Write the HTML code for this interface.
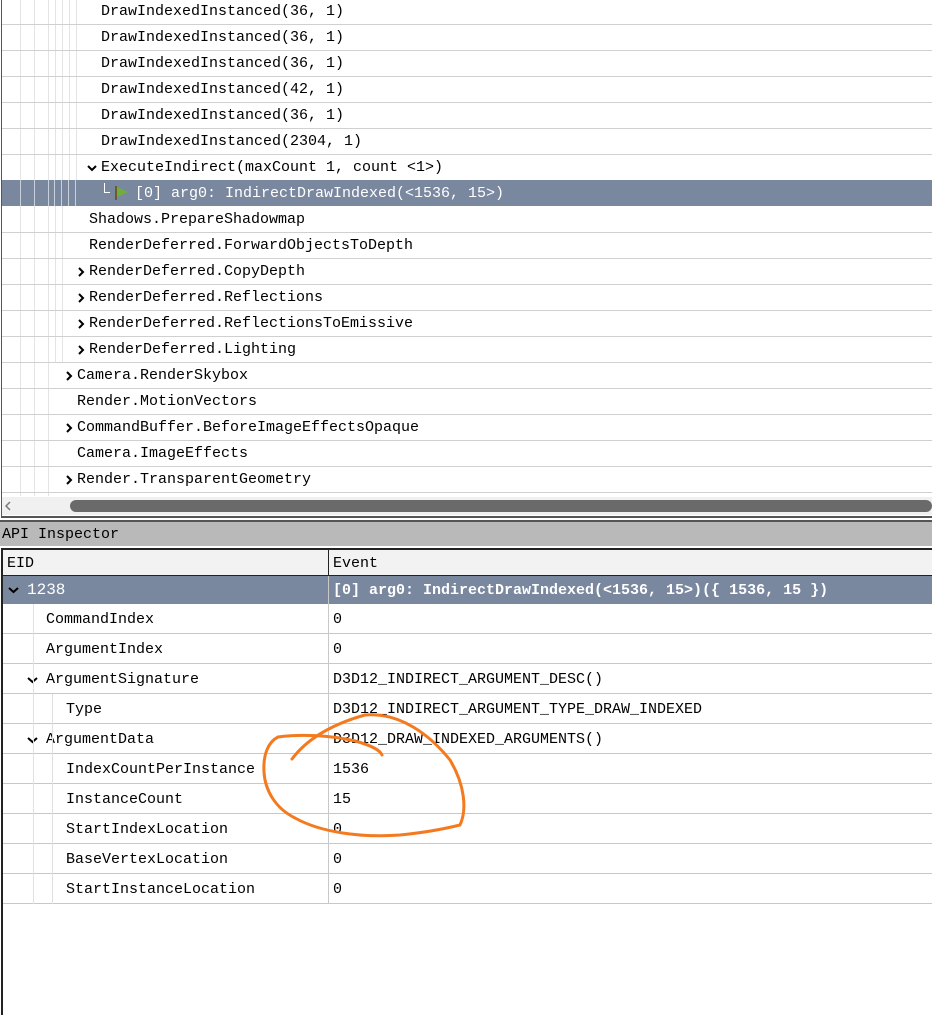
<!DOCTYPE html>
<html><head><style>
body{margin:0;width:932px;height:1015px;background:#fff;position:relative;overflow:hidden;font-family:"Liberation Mono","Noto Sans CJK SC",monospace;font-size:15px;color:#000}
.a{position:absolute;white-space:nowrap}
.r{position:absolute;left:2px;right:0;height:26px;border-bottom:1px solid #d0d0d0}
.t{position:absolute;line-height:27px;white-space:nowrap}
.v{position:absolute;width:1px;background:#e4e4e4}
.ir{position:absolute;left:3px;right:0;height:29px;border-bottom:1px solid #c8c8c8}
.it{position:absolute;line-height:31px;white-space:nowrap}
svg.c{position:absolute}
</style></head><body>
<div class="a" style="left:1px;top:0;width:1px;height:518px;background:#555"></div>
<div class="v" style="left:20px;top:0;height:496px"></div>
<div class="v" style="left:34px;top:0;height:496px"></div>
<div class="v" style="left:48px;top:0;height:496px"></div>
<div class="v" style="left:55px;top:0;height:362px"></div>
<div class="v" style="left:62px;top:0;height:362px"></div>
<div class="v" style="left:69px;top:0;height:180px"></div>
<div class="v" style="left:76px;top:0;height:180px"></div>

<div class="r" style="top:-2px"><span class="t" style="left:99px">DrawIndexedInstanced(36, 1)</span></div>
<div class="r" style="top:24px"><span class="t" style="left:99px">DrawIndexedInstanced(36, 1)</span></div>
<div class="r" style="top:50px"><span class="t" style="left:99px">DrawIndexedInstanced(36, 1)</span></div>
<div class="r" style="top:76px"><span class="t" style="left:99px">DrawIndexedInstanced(42, 1)</span></div>
<div class="r" style="top:102px"><span class="t" style="left:99px">DrawIndexedInstanced(36, 1)</span></div>
<div class="r" style="top:128px"><span class="t" style="left:99px">DrawIndexedInstanced(2304, 1)</span></div>
<div class="r" style="top:154px"><svg class="c" style="left:85px;top:11px" width="10" height="7"><path d="M1 1L5 5L9 1" fill="none" stroke="#000" stroke-width="2"/></svg><span class="t" style="left:99px">ExecuteIndirect(maxCount 1, count &lt;1&gt;)</span></div>
<div class="r" style="top:180px;background:#7a889f;border-bottom:none;height:26px">
<div class="a" style="left:18px;top:0;width:1px;height:26px;background:#c8d0dc"></div>
<div class="a" style="left:32px;top:0;width:1px;height:26px;background:#c8d0dc"></div>
<div class="a" style="left:46px;top:0;width:1px;height:26px;background:#c8d0dc"></div>
<div class="a" style="left:52px;top:0;width:1px;height:26px;background:#c8d0dc"></div>
<div class="a" style="left:59px;top:0;width:1px;height:26px;background:#c8d0dc"></div>
<div class="a" style="left:66px;top:0;width:1px;height:26px;background:#c8d0dc"></div>
<div class="a" style="left:73px;top:0;width:1px;height:26px;background:#c8d0dc"></div>
<div class="a" style="left:102px;top:3px;width:5px;height:9px;border-left:1px solid #fff;border-bottom:1px solid #fff"></div>
<svg class="a" style="left:112px;top:5px" width="16" height="16"><path d="M2 1 L2 15" stroke="#6b5a2a" stroke-width="2"/><path d="M3 2 L14 7 L3 12Z" fill="#6fae3a"/></svg>
<span class="t" style="left:133px;color:#fff">[0] arg0: IndirectDrawIndexed(&lt;1536, 15&gt;)</span></div>
<div class="r" style="top:206px"><span class="t" style="left:87px">Shadows.PrepareShadowmap</span></div>
<div class="r" style="top:232px"><span class="t" style="left:87px">RenderDeferred.ForwardObjectsToDepth</span></div>
<div class="r" style="top:258px"><svg class="c" style="left:76px;top:9px" width="7" height="10"><path d="M1 1L5 5L1 9" fill="none" stroke="#000" stroke-width="2"/></svg><span class="t" style="left:87px">RenderDeferred.CopyDepth</span></div>
<div class="r" style="top:284px"><svg class="c" style="left:76px;top:9px" width="7" height="10"><path d="M1 1L5 5L1 9" fill="none" stroke="#000" stroke-width="2"/></svg><span class="t" style="left:87px">RenderDeferred.Reflections</span></div>
<div class="r" style="top:310px"><svg class="c" style="left:76px;top:9px" width="7" height="10"><path d="M1 1L5 5L1 9" fill="none" stroke="#000" stroke-width="2"/></svg><span class="t" style="left:87px">RenderDeferred.ReflectionsToEmissive</span></div>
<div class="r" style="top:336px"><svg class="c" style="left:76px;top:9px" width="7" height="10"><path d="M1 1L5 5L1 9" fill="none" stroke="#000" stroke-width="2"/></svg><span class="t" style="left:87px">RenderDeferred.Lighting</span></div>
<div class="r" style="top:362px"><svg class="c" style="left:64px;top:9px" width="7" height="10"><path d="M1 1L5 5L1 9" fill="none" stroke="#000" stroke-width="2"/></svg><span class="t" style="left:75px">Camera.RenderSkybox</span></div>
<div class="r" style="top:388px"><span class="t" style="left:75px">Render.MotionVectors</span></div>
<div class="r" style="top:414px"><svg class="c" style="left:64px;top:9px" width="7" height="10"><path d="M1 1L5 5L1 9" fill="none" stroke="#000" stroke-width="2"/></svg><span class="t" style="left:75px">CommandBuffer.BeforeImageEffectsOpaque</span></div>
<div class="r" style="top:440px"><span class="t" style="left:75px">Camera.ImageEffects</span></div>
<div class="r" style="top:466px"><svg class="c" style="left:64px;top:9px" width="7" height="10"><path d="M1 1L5 5L1 9" fill="none" stroke="#000" stroke-width="2"/></svg><span class="t" style="left:75px">Render.TransparentGeometry</span></div>
<div class="a" style="left:2px;top:497px;width:930px;height:18px;background:#f0f0f0"></div>
<svg class="c" style="left:5px;top:501px" width="7" height="10"><path d="M5 1L1 5L5 9" fill="none" stroke="#777" stroke-width="1.5"/></svg>
<div class="a" style="left:70px;top:500px;width:862px;height:12px;background:#6a6a6a;border-radius:6px"></div>
<div class="a" style="left:1px;top:516px;width:931px;height:2px;background:#555"></div>
<div class="a" style="left:0;top:520px;width:932px;height:2px;background:#555"></div>
<div class="a" style="left:0;top:522px;width:932px;height:24px;background:#b9b9b9;line-height:25px;padding-left:2px">API Inspector</div>
<div class="a" style="left:1px;top:548px;width:931px;height:2px;background:#222"></div>
<div class="a" style="left:1px;top:548px;width:2px;height:467px;background:#222"></div>
<div class="a" style="left:3px;top:550px;width:929px;height:25px;background:#f2f2f2;border-bottom:1px solid #222"></div>
<div class="a" style="left:7px;top:550px;line-height:27px">EID</div>
<div class="a" style="left:328px;top:550px;width:1px;height:26px;background:#222"></div>
<div class="a" style="left:333px;top:550px;line-height:27px">Event</div>
<div class="a" style="left:3px;top:576px;width:929px;height:28px;background:#7a889f"></div>
<svg class="c" style="left:8px;top:587px" width="11" height="7"><path d="M1 1L5.5 5L10 1" fill="none" stroke="#000" stroke-width="2"/></svg>
<div class="a" style="left:27px;top:576px;line-height:29px;color:#fff;font-size:16px">1238</div>
<div class="a" style="left:328px;top:576px;width:1px;height:328px;background:#c8c8c8"></div>
<div class="a" style="left:333px;top:576px;line-height:29px;color:#fff;font-weight:bold">[0] arg0: IndirectDrawIndexed(&lt;1536, 15&gt;)({ 1536, 15 })</div>

<div class="ir" style="top:604px"><span class="it" style="left:43px">CommandIndex</span><span class="it" style="left:330px">0</span></div>
<div class="ir" style="top:634px"><span class="it" style="left:43px">ArgumentIndex</span><span class="it" style="left:330px">0</span></div>
<div class="ir" style="top:664px"><svg class="c" style="left:24px;top:13px" width="11" height="7"><path d="M1 1L5.5 5L10 1" fill="none" stroke="#000" stroke-width="2"/></svg><span class="it" style="left:43px">ArgumentSignature</span><span class="it" style="left:330px">D3D12_INDIRECT_ARGUMENT_DESC()</span></div>
<div class="ir" style="top:694px"><span class="it" style="left:63px">Type</span><span class="it" style="left:330px">D3D12_INDIRECT_ARGUMENT_TYPE_DRAW_INDEXED</span></div>
<div class="ir" style="top:724px"><svg class="c" style="left:24px;top:13px" width="11" height="7"><path d="M1 1L5.5 5L10 1" fill="none" stroke="#000" stroke-width="2"/></svg><span class="it" style="left:43px">ArgumentData</span><span class="it" style="left:330px">D3D12_DRAW_INDEXED_ARGUMENTS()</span></div>
<div class="ir" style="top:754px"><span class="it" style="left:63px">IndexCountPerInstance</span><span class="it" style="left:330px">1536</span></div>
<div class="ir" style="top:784px"><span class="it" style="left:63px">InstanceCount</span><span class="it" style="left:330px">15</span></div>
<div class="ir" style="top:814px"><span class="it" style="left:63px">StartIndexLocation</span><span class="it" style="left:330px">0</span></div>
<div class="ir" style="top:844px"><span class="it" style="left:63px">BaseVertexLocation</span><span class="it" style="left:330px">0</span></div>
<div class="ir" style="top:874px"><span class="it" style="left:63px">StartInstanceLocation</span><span class="it" style="left:330px">0</span></div>
<div class="a" style="left:33px;top:604px;width:1px;height:300px;background:#e0e0e0"></div>
<div class="a" style="left:52px;top:694px;width:1px;height:210px;background:#e0e0e0"></div>
<svg class="a" style="left:0;top:0" width="932" height="1015">
<path d="M292 759 C310 735 340 722 365 715 C400 712 430 735 450 760 C465 785 467 810 460 825 C440 830 420 833 400 835 C360 838 320 832 295 818 C275 808 265 790 264 772 C263 755 268 742 278 737 C300 734 330 735 355 741 C370 745 380 750 382 755" fill="none" stroke="#f47a20" stroke-width="3" stroke-linecap="round"/>
</svg>
</body></html>
